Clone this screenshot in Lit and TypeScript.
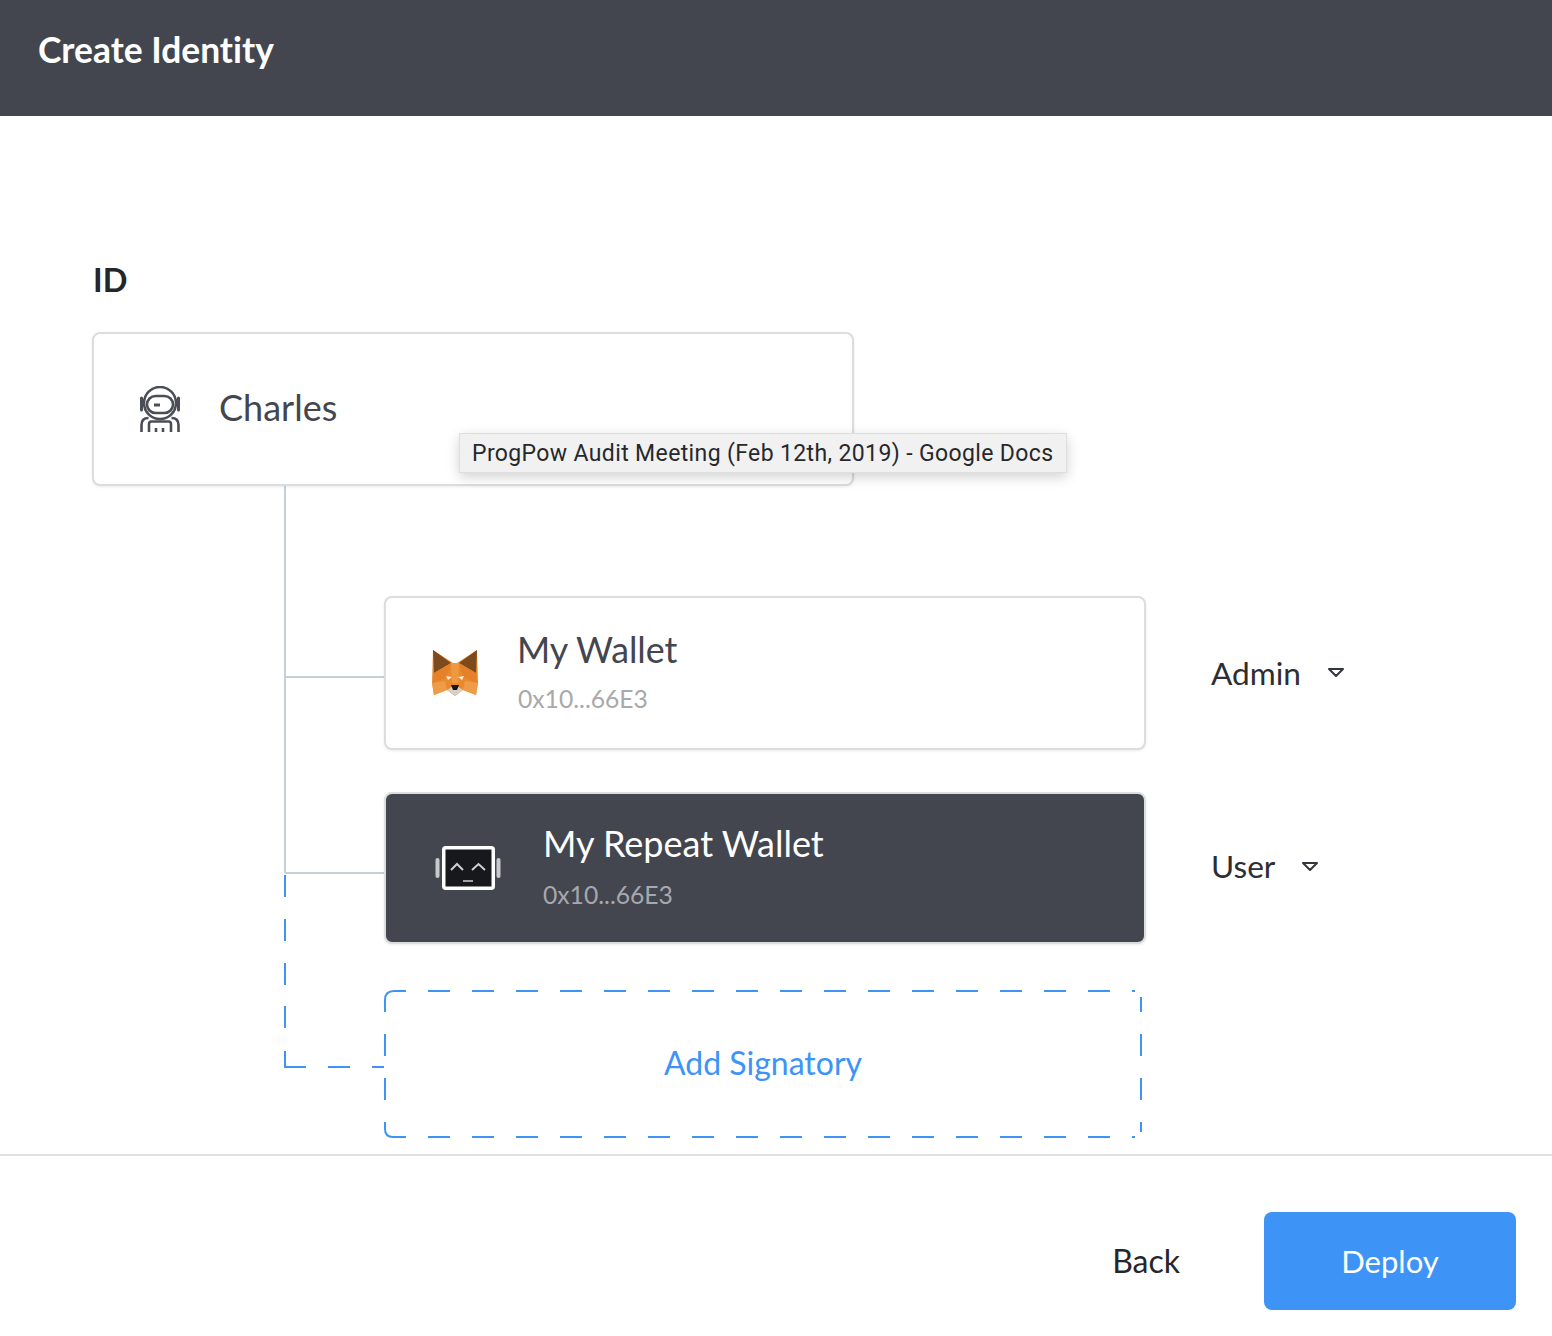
import { LitElement, html, css, svg } from 'lit';
import { customElement } from 'lit/decorators.js';

const astronaut = html`<svg class="icon" width="40" height="46" viewBox="0 0 40 46" fill="none" stroke="#4b4e57" stroke-width="2.6">
  <circle cx="20" cy="17" r="16" />
  <path d="M1.500 12v12M38.500 12v12" stroke-width="3" stroke-linecap="round" />
  <rect x="7" y="10" width="26" height="17" rx="8.500" />
  <path d="M14 19h6" stroke-width="3" />
  <path d="M1.500 46v-7c0-5 3-7 7-7M38.500 46v-7c0-5-3-7-7-7M9 46v-8c0-1.500 1-2.500 2.500-2.500h17c1.500 0 2.500 1 2.500 2.500v8" />
  <path d="M16 46v-4M23 46v-4" />
</svg>`;

const fox = html`<svg class="icon" width="46" height="46" viewBox="0 0 46 46">
  <polygon points="1,0 21,13 25,13 45,0 46,33 44,45 31,40 23,46 15,40 2,45 0,33" fill="#e98a2f" />
  <polygon points="1,0 19,13 2,23" fill="#7c4a1d" />
  <polygon points="45,0 27,13 44,23" fill="#7c4a1d" />
  <polygon points="2,23 19,13 15,27 1,33" fill="#e48129" />
  <polygon points="44,23 27,13 31,27 45,33" fill="#e48129" />
  <polygon points="0,33 13,31 15,40 2,45" fill="#ee9c48" />
  <polygon points="46,33 33,31 31,40 44,45" fill="#ee9c48" />
  <polygon points="19,13 27,13 26,33 20,33" fill="#ef9a3f" />
  <polygon points="15,40 23,35 31,40 23,46" fill="#d6d0c8" />
  <polygon points="19,35 27,35 25,40 21,40" fill="#1b1411" />
  <polygon points="14,26 20,27 16,30" fill="#f8efe2" />
  <polygon points="32,26 26,27 30,30" fill="#f8efe2" />
</svg>`;

const robot = html`<svg class="icon" width="66" height="46" viewBox="0 0 66 46" fill="none">
  <rect x="0.500" y="13" width="4" height="20" rx="2" fill="#c9cacc" />
  <rect x="61.500" y="13" width="4" height="20" rx="2" fill="#c9cacc" />
  <rect x="8.750" y="2.750" width="49.500" height="40.500" rx="2" fill="#17181b" stroke="#fff" stroke-width="3.500" />
  <path d="M16 25l6-6 6 6M37 25l6.500-6 6.500 6" stroke="#cfcfcf" stroke-width="2" />
  <path d="M28 36h10" stroke="#a2a2a2" stroke-width="2" />
</svg>`;

const chevron = html`<svg class="chevron" width="18" height="11" viewBox="0 0 18 11" fill="none">
  <path d="M2 2h14l-7 7z" stroke="#33363c" stroke-width="2" stroke-linejoin="round" />
</svg>`;

// box outline as drawn in the reference, dashes are not evenly spread round the corners
const addOutline = () => {
  const dashes: string[] = [
    'M1 22V10Q1 1 10 1H22',
    'M748 1h3',
    'M757 7V22',
    'M757 132V142',
    'M748 147h3',
    'M1 132V139Q1 147 9 147H22',
  ];
  for (let x = 44; x < 720; x += 44) {
    dashes.push(`M${x} 1h22`, `M${x} 147h22`);
  }
  for (const y of [44, 88]) {
    dashes.push(`M1 ${y}v22`, `M757 ${y}v22`);
  }
  return dashes.join('');
};

const connectorDashes = 'M1 389v22M1 433v22M1 477v22M1 520v22M1 565V581H22M44 581h22M88 581h12';

@customElement('app-root')
export class AppRoot extends LitElement {
  static styles = css`
    :host {
      display: flex;
      flex-direction: column;
      height: 1336px;
      background: #fff;
      font-family: 'Lato', 'Open Sans', sans-serif;
      font-variant-ligatures: none;
      color: #43464f;
    }

    .bar {
      height: 116px;
      flex: none;
      box-sizing: border-box;
      padding: 29px 38px 0;
      background: #43464f;
      color: #fff;
      font-size: 35.400px;
      line-height: 42px;
      font-weight: 700;
    }

    main {
      flex: 1;
      padding: 145px 0 0 93px;
    }

    .label {
      margin: 0 0 33px;
      font-size: 32.500px;
      line-height: 38px;
      font-weight: 700;
      color: #24262b;
    }

    .card {
      box-sizing: border-box;
      width: 762px;
      display: flex;
      align-items: center;
      border: 2px solid #dcdddd;
      border-radius: 8px;
      background: #fff;
      box-shadow: 0 1px 3px rgba(0, 0, 0, 0.08);
    }

    .id-card {
      position: relative;
      height: 154px;
      margin-left: -1px;
      padding-left: 46px;
      gap: 39px;
      font-size: 36px;
    }

    .id-card .who {
      padding-bottom: 4px;
    }

    .icon {
      flex: none;
      display: block;
    }

    .tip {
      position: absolute;
      left: 365px;
      top: 99px;
      box-sizing: border-box;
      width: 608px;
      height: 40px;
      padding: 0 12px;
      display: flex;
      align-items: center;
      white-space: nowrap;
      background: #f1f1f1;
      border: 1px solid #dedede;
      box-shadow: 0 4px 12px rgba(0, 0, 0, 0.18);
      font-family: 'Roboto', sans-serif;
      font-size: 23px;
      letter-spacing: 0.37px;
      color: #26282c;
    }

    .tree {
      display: flex;
      margin-left: 191px;
    }

    .lines {
      flex: none;
      display: block;
      overflow: visible;
    }

    .rows {
      display: flex;
      flex-direction: column;
      padding-top: 110px;
    }

    .row {
      display: flex;
      align-items: center;
      gap: 65px;
    }

    .wallet {
      height: 154px;
      padding-left: 46px;
      gap: 39px;
      margin-bottom: 42px;
    }

    .wallet.dark {
      height: 152px;
      padding-left: 49px;
      gap: 41px;
      margin-bottom: 46px;
      background: #43464f;
      color: #fff;
    }

    .who {
      padding-bottom: 3px;
    }

    .name {
      font-size: 35.800px;
      line-height: 42px;
    }

    .dark .who {
      padding-bottom: 4px;
    }

    .dark .name {
      font-size: 36px;
      padding-left: 1px;
    }

    .addr {
      margin-top: 13px;
      padding-left: 1px;
      font-size: 24.700px;
      line-height: 30px;
      color: #a9a9a9;
    }

    .dark .addr {
      margin-top: 16px;
      color: #a6a8ad;
    }

    .role {
      display: flex;
      align-items: center;
      gap: 26px;
      margin-bottom: 43px;
      font-size: 31.600px;
      color: #2c2e33;
    }

    .role.user {
      margin-bottom: 50px;
    }

    .chevron {
      display: block;
    }

    .add {
      position: relative;
      box-sizing: border-box;
      width: 758px;
      height: 148px;
      display: flex;
      align-items: center;
      justify-content: center;
      padding-bottom: 4px;
      font-size: 32px;
      color: #3d94f6;
    }

    .add svg {
      position: absolute;
      inset: 0;
    }

    footer {
      flex: none;
      height: 182px;
      box-sizing: border-box;
      border-top: 2px solid #e0e0e0;
      padding: 56px 36px 0 0;
      display: flex;
      justify-content: flex-end;
      align-items: flex-start;
      gap: 84px;
    }

    .back {
      line-height: 98px;
      font-size: 32px;
      color: #24262b;
    }

    .deploy {
      width: 252px;
      height: 98px;
      display: flex;
      align-items: center;
      justify-content: center;
      border-radius: 8px;
      background: #3d94f6;
      color: #fff;
      font-size: 31px;
    }
  `;

  render() {
    return html`
      <div class="bar">Create Identity</div>
      <main>
        <h2 class="label">ID</h2>
        <div class="card id-card">
          ${astronaut}
          <span class="who">Charles</span>
          <div class="tip">ProgPow Audit Meeting (Feb 12th, 2019) - Google Docs</div>
        </div>
        <div class="tree">
          <svg class="lines" width="100" height="584" viewBox="0 0 100 584" fill="none">
            <path d="M1 0V387M1 191H100M1 387H100" stroke="#c6ced6" stroke-width="2" />
            ${svg`<path d=${connectorDashes} stroke="#3d94f6" stroke-width="2" />`}
          </svg>
          <div class="rows">
            <div class="row">
              <div class="card wallet">
                ${fox}
                <div class="who">
                  <div class="name">My Wallet</div>
                  <div class="addr">0x10...66E3</div>
                </div>
              </div>
              <div class="role">Admin ${chevron}</div>
            </div>
            <div class="row">
              <div class="card wallet dark">
                ${robot}
                <div class="who">
                  <div class="name">My Repeat Wallet</div>
                  <div class="addr">0x10...66E3</div>
                </div>
              </div>
              <div class="role user">User ${chevron}</div>
            </div>
            <div class="add">
              <svg width="758" height="148" viewBox="0 0 758 148" fill="none">
                ${svg`<path d=${addOutline()} stroke="#3d94f6" stroke-width="2" />`}
              </svg>
              Add Signatory
            </div>
          </div>
        </div>
      </main>
      <footer>
        <div class="back">Back</div>
        <div class="deploy">Deploy</div>
      </footer>
    `;
  }
}
